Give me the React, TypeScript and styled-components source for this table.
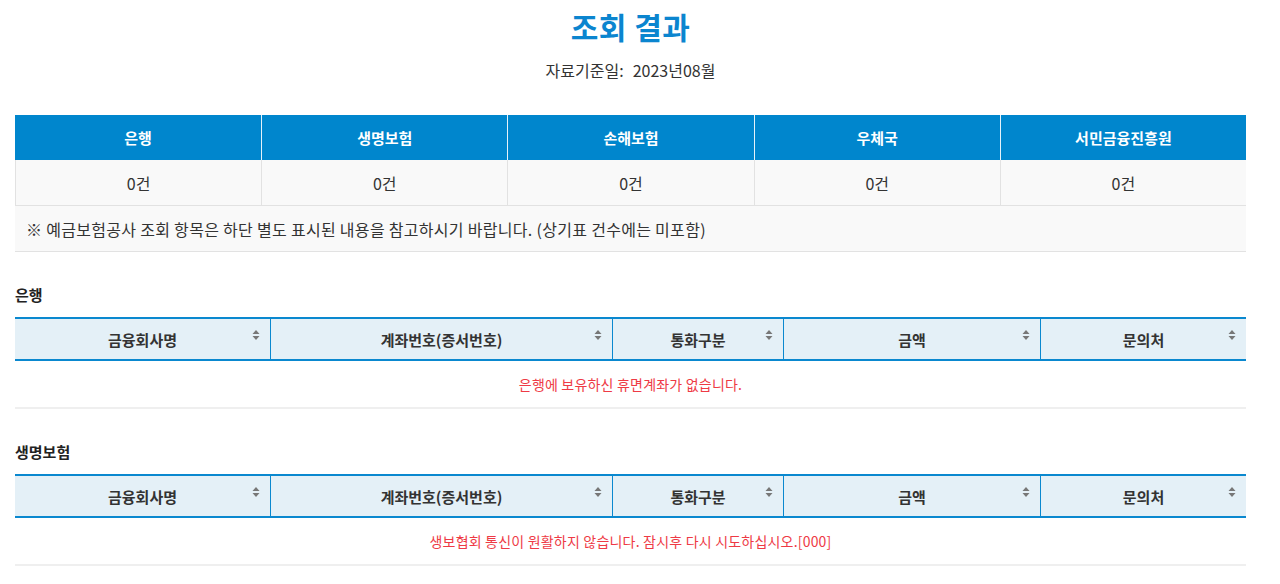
import React from "react";
import styled, { createGlobalStyle } from "styled-components";

const Global = createGlobalStyle`
  html, body { margin: 0; padding: 0; background: #fff; }
  body { font-family: "Noto Sans CJK KR", "Noto Sans", sans-serif; color: #333; }
  * { box-sizing: border-box; }
`;

const Page = styled.div`
  padding: 0 34px 0 15px;
  display: flex;
  flex-direction: column;
`;

const Title = styled.h1`
  margin: 6px 0 0;
  text-align: center;
  font-size: 30px;
  font-weight: 700;
  line-height: 40px;
  color: #0b85cf;
  letter-spacing: 0.5px;
`;

const BaseDate = styled.div`
  margin-top: 14px;
  text-align: center;
  font-size: 16px;
  line-height: 20px;
  color: #333;
  span { margin-left: 9px; }
`;

const Summary = styled.div`
  margin-top: 35px;
  display: grid;
  grid-template-columns: repeat(5, 1fr);
`;

const SumHead = styled.div`
  height: 45px;
  background: #0086cd;
  color: #fff;
  font-size: 15px;
  font-weight: 700;
  display: flex;
  align-items: center;
  justify-content: center;
  border-left: 1px solid #e6f2fa;
  &:first-child { border-left: none; }
`;

const SumCell = styled.div`
  height: 46px;
  background: #f9f9f9;
  font-size: 16px;
  color: #333;
  display: flex;
  align-items: center;
  justify-content: center;
  border-left: 1px solid #e2e2e2;
  border-bottom: 1px solid #e2e2e2;
  &:first-of-type { border-left: none; }
`;

const Note = styled.div`
  grid-column: 1 / -1;
  height: 46px;
  background: #f9f9f9;
  border-bottom: 1px solid #e2e2e2;
  padding-left: 11px;
  display: flex;
  align-items: center;
  font-size: 16px;
  letter-spacing: 0.3px;
  color: #333;
`;

const SectionTitle = styled.h2`
  margin: 33px 0 12px;
  font-size: 15px;
  font-weight: 700;
  line-height: 20px;
  color: #222;
`;

const Table = styled.div<{ $cols: string }>`
  display: grid;
  grid-template-columns: ${(p) => p.$cols};
  border-top: 2px solid #0a88cf;
  border-bottom: 2px solid #0a88cf;
`;

const Th = styled.div`
  position: relative;
  height: 40px;
  background: #e4f0f7;
  font-size: 15px;
  font-weight: 700;
  color: #333;
  display: flex;
  align-items: center;
  justify-content: center;
  border-left: 1px solid #0a88cf;
  &:first-child { border-left: none; }
`;

const SortIcon = styled.svg`
  position: absolute;
  top: 10px;
  right: 10px;
  width: 8px;
  height: 12px;
`;

const Empty = styled.div`
  height: 48px;
  border-bottom: 2px solid #efefef;
  display: flex;
  align-items: center;
  justify-content: center;
  font-size: 14px;
  letter-spacing: 0.2px;
  color: #ee3a45;
`;

const heads = ["은행", "생명보험", "손해보험", "우체국", "서민금융진흥원"];
const cols = ["금융회사명", "계좌번호(증서번호)", "통화구분", "금액", "문의처"];
const colWidths = "255fr 342fr 171fr 257fr 206fr";

const Sort = () => (
  <SortIcon viewBox="0 0 8 12">
    <path d="M4 1 L7.5 5 L0.5 5 Z" fill="#777" />
    <path d="M4 11 L7.5 7 L0.5 7 Z" fill="#777" />
  </SortIcon>
);

const Section = ({ title, message }: { title: string; message: string }) => (
  <>
    <SectionTitle>{title}</SectionTitle>
    <Table $cols={colWidths}>
      {cols.map((c) => (
        <Th key={c}>
          {c}
          <Sort />
        </Th>
      ))}
    </Table>
    <Empty>{message}</Empty>
  </>
);

export default function App() {
  return (
    <>
      <Global />
      <Page>
        <Title>조회 결과</Title>
        <BaseDate>
          자료기준일:<span>2023년08월</span>
        </BaseDate>
        <Summary>
          {heads.map((h) => (
            <SumHead key={h}>{h}</SumHead>
          ))}
          {heads.map((h) => (
            <SumCell key={h}>0건</SumCell>
          ))}
          <Note>※ 예금보험공사 조회 항목은 하단 별도 표시된 내용을 참고하시기 바랍니다. (상기표 건수에는 미포함)</Note>
        </Summary>
        <Section title="은행" message="은행에 보유하신 휴면계좌가 없습니다." />
        <Section title="생명보험" message="생보협회 통신이 원활하지 않습니다. 잠시후 다시 시도하십시오.[000]" />
      </Page>
    </>
  );
}
